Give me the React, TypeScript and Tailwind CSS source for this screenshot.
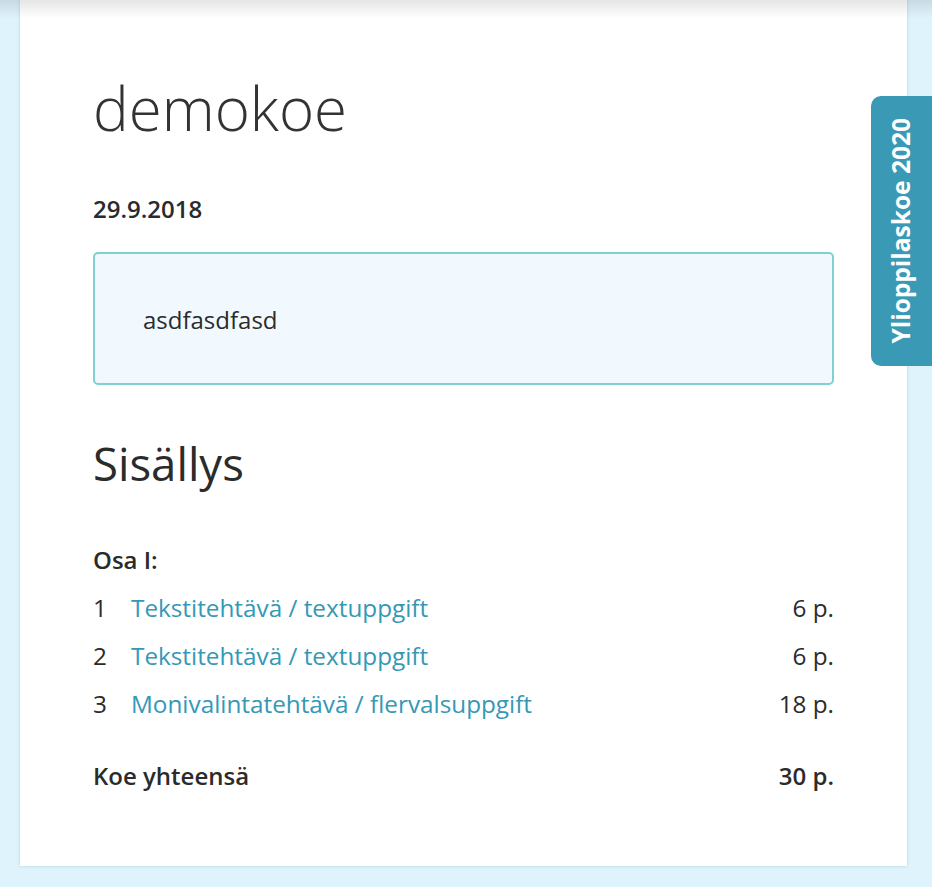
import React from 'react';

const items = [
  { n: 1, title: 'Tekstitehtävä / textuppgift', points: 6 },
  { n: 2, title: 'Tekstitehtävä / textuppgift', points: 6 },
  { n: 3, title: 'Monivalintatehtävä / flervalsuppgift', points: 18 },
];

export default function App() {
  const total = items.reduce((s, i) => s + i.points, 0);

  return (
    <div className="min-h-screen bg-[#dff3fc] pb-[21px] font-['Open_Sans',sans-serif] text-[#2b2b2b]">
      <div className="pointer-events-none fixed inset-x-0 top-0 h-[18px] bg-gradient-to-b from-black/10 to-transparent" />

      <main className="ml-[20px] w-[887px] bg-white px-[73px] pt-[72px] pb-[66px] shadow-[0_0_3px_rgba(120,170,200,0.45)]">
        <h1 className="text-[60px] font-light leading-[72px] text-[#333]">demokoe</h1>

        <p className="mt-[47px] text-[24px] font-semibold leading-[36px]">29.9.2018</p>

        <div className="mt-[25px] rounded-[5px] border-2 border-[#80d0d2] bg-[#f1f9ff] px-[48px] pt-[48px] pb-[45px]">
          <p className="text-[24px] leading-[36px]">asdfasdfasd</p>
        </div>

        <h2 className="mt-[52px] text-[45.5px] leading-[53px]">Sisällys</h2>

        <h3 className="mt-[46px] text-[24px] font-semibold leading-[48px]">Osa I:</h3>

        <ul className="text-[24.3px] leading-[48px]">
          {items.map((item) => (
            <li key={item.n} className="flex">
              <span className="w-[38px]">{item.n}</span>
              <a href="#" className="flex-1 text-[#3598b5]">
                {item.title}
              </a>
              <span>{item.points} p.</span>
            </li>
          ))}
        </ul>

        <div className="mt-[24px] flex justify-between text-[24px] font-semibold leading-[48px]">
          <span>Koe yhteensä</span>
          <span>{total} p.</span>
        </div>
      </main>

      <div className="fixed right-0 top-[96px] flex h-[270px] w-[61px] items-center justify-center rounded-l-[10px] bg-[#3a9ab5]">
        <span className="rotate-180 text-[24.5px] font-bold text-white [writing-mode:vertical-rl]">
          Ylioppilaskoe 2020
        </span>
      </div>
    </div>
  );
}
